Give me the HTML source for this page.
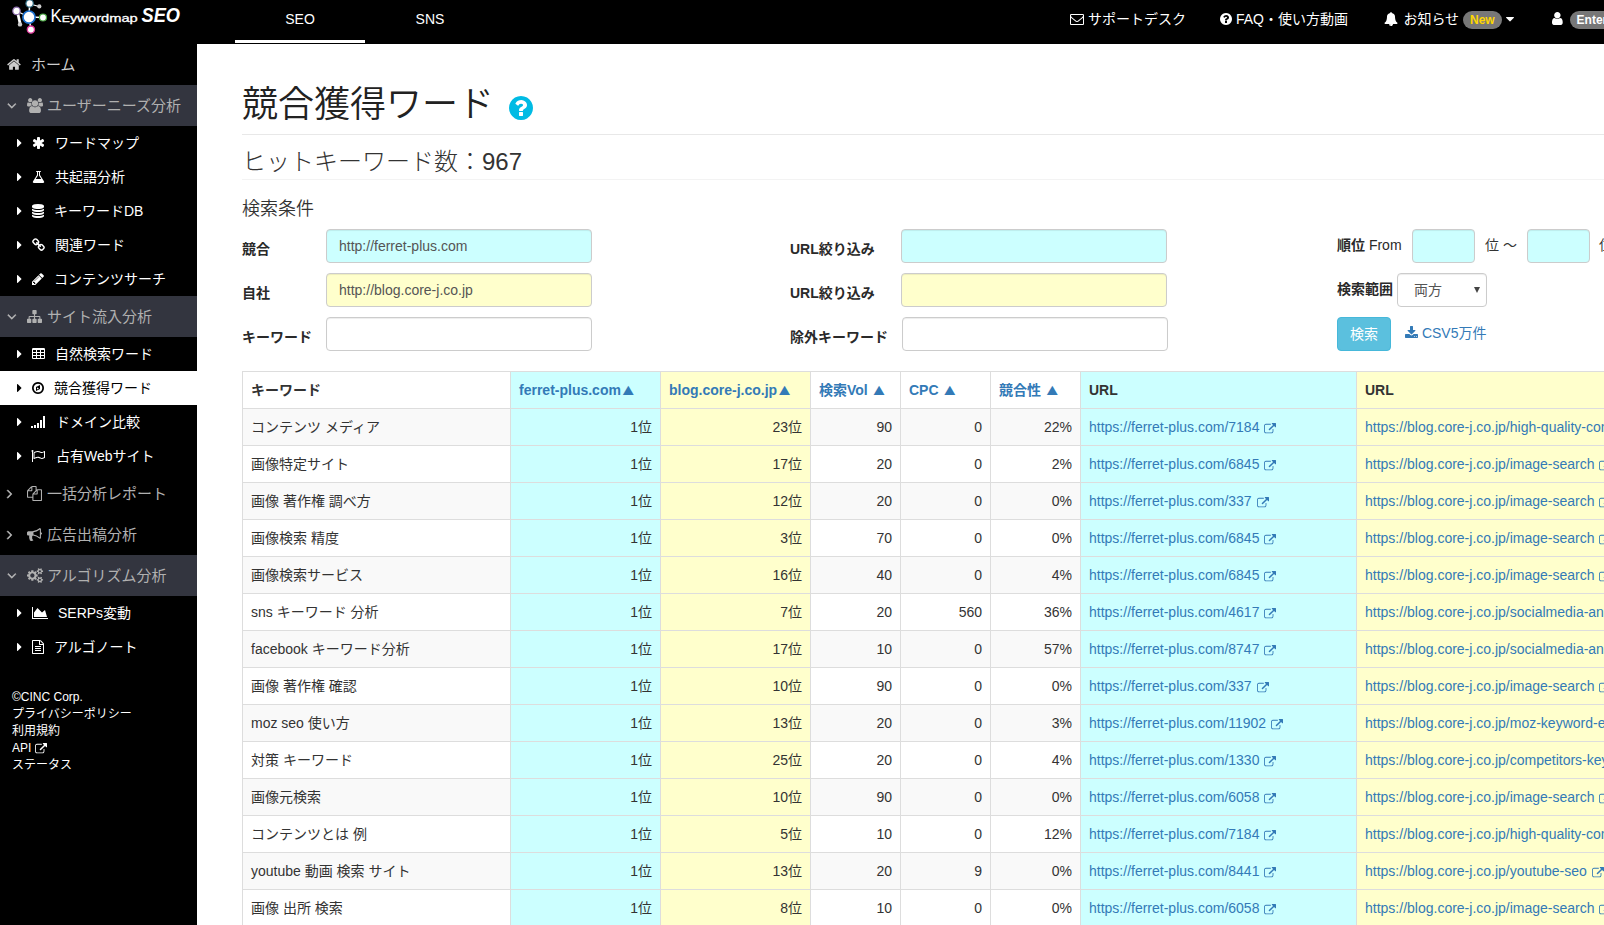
<!DOCTYPE html><html lang="ja"><head><meta charset="utf-8"><title>Keywordmap SEO</title><style>
*{box-sizing:border-box}
html,body{margin:0;padding:0}
body{width:1604px;height:925px;overflow:hidden;position:relative;background:#fff;color:#333;font-family:"Liberation Sans","Noto Sans CJK JP",sans-serif;font-size:14px;line-height:20px}
svg.i{display:inline-block;vertical-align:-2px;overflow:visible}
#nav{position:absolute;left:0;top:0;width:1604px;height:44px;background:#000;color:#fff;overflow:hidden}
#nav .tab{position:absolute;top:0;height:40px;line-height:38px;text-align:center;font-size:14px;color:#fff}
#nav .tabline{position:absolute;left:235px;top:40px;width:130px;height:3px;background:#fff}
#nav .ni{position:absolute;top:0;height:44px;line-height:39px;white-space:nowrap;font-size:14px}
.badge{display:inline-block;background:#777;color:#fff;font-weight:bold;font-size:12px;line-height:12px;padding:3px 7px;border-radius:10px;vertical-align:0px}
#side{position:absolute;left:0;top:44px;width:197px;height:881px;background:#000;color:#fff}
#side .st{position:absolute;left:0;width:197px;height:41px;line-height:42px;font-size:15px;color:#b0b0b0;margin-top:-44px}
#side .ss{position:absolute;left:0;width:197px;height:34px;line-height:34px;font-size:14px;color:#fff;margin-top:-44px}
#side .ss.act{background:#fff;color:#000}
#side svg.i{position:absolute}
#side span{position:absolute;top:0;white-space:nowrap}
#foot{position:absolute;left:12px;top:645px;font-size:12px;line-height:17px;color:#fff}
#foot svg.i{position:static}
#main{position:absolute;left:0;top:0;width:1604px;height:925px;pointer-events:none}
h1{position:absolute;left:242px;top:85px;margin:0;font-size:36px;line-height:40px;font-weight:350;color:#222;white-space:nowrap}
#help{position:absolute;left:509px;top:94px;height:28px;line-height:28px}
#help svg.i{vertical-align:top}
.hr{position:absolute;left:242px;width:1400px;height:1px;background:#e8e8e8}
h3{position:absolute;left:242px;top:147px;margin:0;font-size:24px;line-height:30px;font-weight:300;white-space:nowrap}
h4{position:absolute;left:242px;top:198px;margin:0;font-size:18px;line-height:22px;font-weight:350;white-space:nowrap}
label{position:absolute;font-weight:bold;white-space:nowrap;line-height:20px;color:#2a2a2a}
.t{position:absolute;white-space:nowrap;line-height:20px}
.inp{position:absolute;height:34px;border:1px solid #ccc;border-radius:4px;padding:6px 12px;line-height:20px;color:#555;box-shadow:inset 0 1px 1px rgba(0,0,0,.075);white-space:nowrap}
.sel{position:absolute;right:6px;top:13px;width:0;height:0;border-left:3.5px solid transparent;border-right:3.5px solid transparent;border-top:6px solid #444}
.btn{position:absolute;width:54px;height:34px;background:#5bc0de;border:1px solid #46b8da;border-radius:4px;color:#fff;text-align:center;line-height:32px}
.csv{position:absolute;color:#337ab7;white-space:nowrap}
table{position:absolute;left:242px;top:371px;border-collapse:collapse;table-layout:fixed;width:1514px}
th,td{border:1px solid #ddd;padding:8px;line-height:20px;text-align:left;white-space:nowrap;overflow:hidden;font-size:14px}
th{font-weight:bold;color:#333}
th.a{color:#337ab7}
td.r{text-align:right}
td.l{color:#337ab7}
tr.o td{background:#f9f9f9}
.b, tr.o td.b{background:#ccffff}
.y, tr.o td.y{background:#ffffcc}
.tri{font-family:"Noto Sans CJK JP",sans-serif;line-height:0;font-size:11.5px;font-weight:normal;margin:0 1.5px 0 1.5px;position:relative;top:-0.5px}

</style></head><body>
<div id="nav">
<svg id="logo" style="position:absolute;left:0;top:0" width="200" height="44" viewBox="0 0 200 44">
<g stroke="#fff" stroke-width="1.5"><line x1="29" y1="17" x2="29.6" y2="4"/><line x1="29" y1="17" x2="43" y2="17.5"/><line x1="29" y1="17" x2="31" y2="30"/><line x1="17.2" y1="11" x2="20" y2="23" stroke-width="2.8"/><line x1="16.5" y1="11" x2="29" y2="17" stroke-width="1.2"/><line x1="30" y1="4" x2="39" y2="6.5" stroke-width="1.2"/></g>
<circle cx="29" cy="17.1" r="6.1" fill="#fff" stroke="#1b70cf" stroke-width="1.7"/>
<circle cx="29.6" cy="3.4" r="3.7" fill="#fff" stroke="#2c6a80" stroke-width="1.2"/>
<circle cx="16.5" cy="10.9" r="3.7" fill="#fff" stroke="#8f6fae" stroke-width="1.2"/>
<circle cx="43" cy="17.5" r="3.5" fill="#fff" stroke="#4aa843" stroke-width="1.2"/>
<circle cx="30.9" cy="29.6" r="3.6" fill="#fff" stroke="#e0379a" stroke-width="1.3"/>
<circle cx="39.3" cy="6.4" r="2.1" fill="#ccc"/><circle cx="20" cy="24.4" r="2.2" fill="#ccc"/>
<text x="50.6" y="21.7" fill="#fff" font-family="Liberation Sans, sans-serif" font-size="18.8" textLength="11.2" lengthAdjust="spacingAndGlyphs">K</text>
<text x="61.8" y="21.7" fill="#fff" stroke="#fff" stroke-width="0.3" font-family="Liberation Sans, sans-serif" font-size="11" textLength="76" lengthAdjust="spacingAndGlyphs"><tspan font-size="9.2">E</tspan>ywordmap</text>
<text x="141.5" y="21.7" fill="#fff" font-family="Liberation Sans, sans-serif" font-size="20" font-weight="bold" font-style="italic" textLength="38.5" lengthAdjust="spacingAndGlyphs">SEO</text>
</svg>

<div class="tab" style="left:235px;width:130px">SEO</div><div class="tabline"></div>
<div class="tab" style="left:365px;width:130px">SNS</div>
<div class="ni" style="left:1070px"><svg class="i " style="width:14.00px;height:14px;" viewBox="0 -1536 1792 1792"><path fill="#fff" transform="scale(1,-1)" d="M1664 32v768q-32 -36 -69 -66q-268 -206 -426 -338q-51 -43 -83 -67t-86.5 -48.5t-102.5 -24.5h-1h-1q-48 0 -102.5 24.5t-86.5 48.5t-83 67q-158 132 -426 338q-37 30 -69 66v-768q0 -13 9.5 -22.5t22.5 -9.5h1472q13 0 22.5 9.5t9.5 22.5zM1664 1083v11v13.5t-0.5 13 t-3 12.5t-5.5 9t-9 7.5t-14 2.5h-1472q-13 0 -22.5 -9.5t-9.5 -22.5q0 -168 147 -284q193 -152 401 -317q6 -5 35 -29.5t46 -37.5t44.5 -31.5t50.5 -27.5t43 -9h1h1q20 0 43 9t50.5 27.5t44.5 31.5t46 37.5t35 29.5q208 165 401 317q54 43 100.5 115.5t46.5 131.5z M1792 1120v-1088q0 -66 -47 -113t-113 -47h-1472q-66 0 -113 47t-47 113v1088q0 66 47 113t113 47h1472q66 0 113 -47t47 -113z"/></svg> サポートデスク</div>
<div class="ni" style="left:1220px"><svg class="i " style="width:12.00px;height:14px;" viewBox="0 -1536 1536 1792"><path fill="#fff" transform="scale(1,-1)" d="M896 160v192q0 14 -9 23t-23 9h-192q-14 0 -23 -9t-9 -23v-192q0 -14 9 -23t23 -9h192q14 0 23 9t9 23zM1152 832q0 88 -55.5 163t-138.5 116t-170 41q-243 0 -371 -213q-15 -24 8 -42l132 -100q7 -6 19 -6q16 0 25 12q53 68 86 92q34 24 86 24q48 0 85.5 -26t37.5 -59 q0 -38 -20 -61t-68 -45q-63 -28 -115.5 -86.5t-52.5 -125.5v-36q0 -14 9 -23t23 -9h192q14 0 23 9t9 23q0 19 21.5 49.5t54.5 49.5q32 18 49 28.5t46 35t44.5 48t28 60.5t12.5 81zM1536 640q0 -209 -103 -385.5t-279.5 -279.5t-385.5 -103t-385.5 103t-279.5 279.5 t-103 385.5t103 385.5t279.5 279.5t385.5 103t385.5 -103t279.5 -279.5t103 -385.5z"/></svg> FAQ・使い方動画</div>
<div class="ni" style="left:1384px"><svg class="i " style="width:14.00px;height:14px;margin-right:1.5px" viewBox="0 -1536 1792 1792"><path fill="#fff" transform="scale(1,-1)" d="M912 -160q0 16 -16 16q-59 0 -101.5 42.5t-42.5 101.5q0 16 -16 16t-16 -16q0 -73 51.5 -124.5t124.5 -51.5q16 0 16 16zM1728 128q0 -52 -38 -90t-90 -38h-448q0 -106 -75 -181t-181 -75t-181 75t-75 181h-448q-52 0 -90 38t-38 90q50 42 91 88t85 119.5t74.5 158.5 t50 206t19.5 260q0 152 117 282.5t307 158.5q-8 19 -8 39q0 40 28 68t68 28t68 -28t28 -68q0 -20 -8 -39q190 -28 307 -158.5t117 -282.5q0 -139 19.5 -260t50 -206t74.5 -158.5t85 -119.5t91 -88z"/></svg> お知らせ <span class="badge" style="color:#ffd700">New</span> <svg class="i " style="width:8.00px;height:14px;" viewBox="0 -1536 1024 1792"><path fill="#fff" transform="scale(1,-1)" d="M1024 832q0 -26 -19 -45l-448 -448q-19 -19 -45 -19t-45 19l-448 448q-19 19 -19 45t19 45t45 19h896q26 0 45 -19t19 -45z"/></svg></div>
<div class="ni" style="left:1552px"><svg class="i " style="width:10.71px;height:15px;margin-right:3px" viewBox="0 -1536 1280 1792"><path fill="#fff" transform="scale(1,-1)" d="M1280 137q0 -109 -62.5 -187t-150.5 -78h-854q-88 0 -150.5 78t-62.5 187q0 85 8.5 160.5t31.5 152t58.5 131t94 89t134.5 34.5q131 -128 313 -128t313 128q76 0 134.5 -34.5t94 -89t58.5 -131t31.5 -152t8.5 -160.5zM1024 1024q0 -159 -112.5 -271.5t-271.5 -112.5 t-271.5 112.5t-112.5 271.5t112.5 271.5t271.5 112.5t271.5 -112.5t112.5 -271.5z"/></svg> <span class="badge">Enterprise</span></div>
</div>
<div id="side">
<div class="st" style="top:44px;"><svg class="i " style="width:13.93px;height:15px;left:7px;top:13px" viewBox="0 -1536 1664 1792"><path fill="#ccc" transform="scale(1,-1)" d="M1408 544v-480q0 -26 -19 -45t-45 -19h-384v384h-256v-384h-384q-26 0 -45 19t-19 45v480q0 1 0.5 3t0.5 3l575 474l575 -474q1 -2 1 -6zM1631 613l-62 -74q-8 -9 -21 -11h-3q-13 0 -21 7l-692 577l-692 -577q-12 -8 -24 -7q-13 2 -21 11l-62 74q-8 10 -7 23.5t11 21.5 l719 599q32 26 76 26t76 -26l244 -204v195q0 14 9 23t23 9h192q14 0 23 -9t9 -23v-408l219 -182q10 -8 11 -21.5t-7 -23.5z"/></svg><span style="left:31px;color:#ccc">ホーム</span></div>
<div class="st" style="top:85px;background:#33353f;"><svg class="i " style="width:9.64px;height:15px;left:7px;top:13px" viewBox="0 -1536 1152 1792"><path fill="#bbb" stroke="#bbb" stroke-width="50" transform="scale(1,-1)" d="M1075 800q0 -13 -10 -23l-466 -466q-10 -10 -23 -10t-23 10l-466 466q-10 10 -10 23t10 23l50 50q10 10 23 10t23 -10l393 -393l393 393q10 10 23 10t23 -10l50 -50q10 -10 10 -23z"/></svg><svg class="i " style="width:16.07px;height:15px;left:27px;top:13px" viewBox="0 -1536 1920 1792"><path fill="#b0b0b0" transform="scale(1,-1)" d="M593 640q-162 -5 -265 -128h-134q-82 0 -138 40.5t-56 118.5q0 353 124 353q6 0 43.5 -21t97.5 -42.5t119 -21.5q67 0 133 23q-5 -37 -5 -66q0 -139 81 -256zM1664 3q0 -120 -73 -189.5t-194 -69.5h-874q-121 0 -194 69.5t-73 189.5q0 53 3.5 103.5t14 109t26.5 108.5 t43 97.5t62 81t85.5 53.5t111.5 20q10 0 43 -21.5t73 -48t107 -48t135 -21.5t135 21.5t107 48t73 48t43 21.5q61 0 111.5 -20t85.5 -53.5t62 -81t43 -97.5t26.5 -108.5t14 -109t3.5 -103.5zM640 1280q0 -106 -75 -181t-181 -75t-181 75t-75 181t75 181t181 75t181 -75 t75 -181zM1344 896q0 -159 -112.5 -271.5t-271.5 -112.5t-271.5 112.5t-112.5 271.5t112.5 271.5t271.5 112.5t271.5 -112.5t112.5 -271.5zM1920 671q0 -78 -56 -118.5t-138 -40.5h-134q-103 123 -265 128q81 117 81 256q0 29 -5 66q66 -23 133 -23q59 0 119 21.5t97.5 42.5 t43.5 21q124 0 124 -353zM1792 1280q0 -106 -75 -181t-181 -75t-181 75t-75 181t75 181t181 75t181 -75t75 -181z"/></svg><span style="left:47px;">ユーザーニーズ分析</span></div>
<div class="ss" style="top:126px"><svg class="i " style="width:5.00px;height:14px;left:17px;top:10px" viewBox="0 -1536 640 1792"><path fill="#fff" transform="scale(1,-1)" d="M576 640q0 -26 -19 -45l-448 -448q-19 -19 -45 -19t-45 19t-19 45v896q0 26 19 45t45 19t45 -19l448 -448q19 -19 19 -45z"/></svg><svg class="i " style="width:13.00px;height:14px;left:31.6px;top:10px" viewBox="0 -1536 1664 1792"><path fill="#fff" transform="scale(1,-1)" d="M1482 486q46 -26 59.5 -77.5t-12.5 -97.5l-64 -110q-26 -46 -77.5 -59.5t-97.5 12.5l-266 153v-307q0 -52 -38 -90t-90 -38h-128q-52 0 -90 38t-38 90v307l-266 -153q-46 -26 -97.5 -12.5t-77.5 59.5l-64 110q-26 46 -12.5 97.5t59.5 77.5l266 154l-266 154 q-46 26 -59.5 77.5t12.5 97.5l64 110q26 46 77.5 59.5t97.5 -12.5l266 -153v307q0 52 38 90t90 38h128q52 0 90 -38t38 -90v-307l266 153q46 26 97.5 12.5t77.5 -59.5l64 -110q26 -46 12.5 -97.5t-59.5 -77.5l-266 -154z"/></svg><span style="left:55px">ワードマップ</span></div>
<div class="ss" style="top:160px"><svg class="i " style="width:5.00px;height:14px;left:17px;top:10px" viewBox="0 -1536 640 1792"><path fill="#fff" transform="scale(1,-1)" d="M576 640q0 -26 -19 -45l-448 -448q-19 -19 -45 -19t-45 19t-19 45v896q0 26 19 45t45 19t45 -19l448 -448q19 -19 19 -45z"/></svg><svg class="i " style="width:13.00px;height:14px;left:31.6px;top:10px" viewBox="0 -1536 1664 1792"><path fill="#fff" transform="scale(1,-1)" d="M1527 88q56 -89 21.5 -152.5t-140.5 -63.5h-1152q-106 0 -140.5 63.5t21.5 152.5l503 793v399h-64q-26 0 -45 19t-19 45t19 45t45 19h512q26 0 45 -19t19 -45t-19 -45t-45 -19h-64v-399zM748 813l-272 -429h712l-272 429l-20 31v37v399h-128v-399v-37z"/></svg><span style="left:55px">共起語分析</span></div>
<div class="ss" style="top:194px"><svg class="i " style="width:5.00px;height:14px;left:17px;top:10px" viewBox="0 -1536 640 1792"><path fill="#fff" transform="scale(1,-1)" d="M576 640q0 -26 -19 -45l-448 -448q-19 -19 -45 -19t-45 19t-19 45v896q0 26 19 45t45 19t45 -19l448 -448q19 -19 19 -45z"/></svg><svg class="i " style="width:12.00px;height:14px;left:32.1px;top:10px" viewBox="0 -1536 1536 1792"><path fill="#fff" transform="scale(1,-1)" d="M768 768q237 0 443 43t325 127v-170q0 -69 -103 -128t-280 -93.5t-385 -34.5t-385 34.5t-280 93.5t-103 128v170q119 -84 325 -127t443 -43zM768 0q237 0 443 43t325 127v-170q0 -69 -103 -128t-280 -93.5t-385 -34.5t-385 34.5t-280 93.5t-103 128v170q119 -84 325 -127 t443 -43zM768 384q237 0 443 43t325 127v-170q0 -69 -103 -128t-280 -93.5t-385 -34.5t-385 34.5t-280 93.5t-103 128v170q119 -84 325 -127t443 -43zM768 1536q208 0 385 -34.5t280 -93.5t103 -128v-128q0 -69 -103 -128t-280 -93.5t-385 -34.5t-385 34.5t-280 93.5 t-103 128v128q0 69 103 128t280 93.5t385 34.5z"/></svg><span style="left:54px">キーワードDB</span></div>
<div class="ss" style="top:228px"><svg class="i " style="width:5.00px;height:14px;left:17px;top:10px" viewBox="0 -1536 640 1792"><path fill="#fff" transform="scale(1,-1)" d="M576 640q0 -26 -19 -45l-448 -448q-19 -19 -45 -19t-45 19t-19 45v896q0 26 19 45t45 19t45 -19l448 -448q19 -19 19 -45z"/></svg><svg class="i " style="width:13.00px;height:14px;left:31.6px;top:10px" viewBox="0 -1536 1664 1792"><path fill="#fff" transform="scale(1,-1)" d="M1456 320q0 40 -28 68l-208 208q-28 28 -68 28q-42 0 -72 -32q3 -3 19 -18.5t21.5 -21.5t15 -19t13 -25.5t3.5 -27.5q0 -40 -28 -68t-68 -28q-15 0 -27.5 3.5t-25.5 13t-19 15t-21.5 21.5t-18.5 19q-33 -31 -33 -73q0 -40 28 -68l206 -207q27 -27 68 -27q40 0 68 26 l147 146q28 28 28 67zM753 1025q0 40 -28 68l-206 207q-28 28 -68 28q-39 0 -68 -27l-147 -146q-28 -28 -28 -67q0 -40 28 -68l208 -208q27 -27 68 -27q42 0 72 31q-3 3 -19 18.5t-21.5 21.5t-15 19t-13 25.5t-3.5 27.5q0 40 28 68t68 28q15 0 27.5 -3.5t25.5 -13t19 -15 t21.5 -21.5t18.5 -19q33 31 33 73zM1648 320q0 -120 -85 -203l-147 -146q-83 -83 -203 -83q-121 0 -204 85l-206 207q-83 83 -83 203q0 123 88 209l-88 88q-86 -88 -208 -88q-120 0 -204 84l-208 208q-84 84 -84 204t85 203l147 146q83 83 203 83q121 0 204 -85l206 -207 q83 -83 83 -203q0 -123 -88 -209l88 -88q86 88 208 88q120 0 204 -84l208 -208q84 -84 84 -204z"/></svg><span style="left:55px">関連ワード</span></div>
<div class="ss" style="top:262px"><svg class="i " style="width:5.00px;height:14px;left:17px;top:10px" viewBox="0 -1536 640 1792"><path fill="#fff" transform="scale(1,-1)" d="M576 640q0 -26 -19 -45l-448 -448q-19 -19 -45 -19t-45 19t-19 45v896q0 26 19 45t45 19t45 -19l448 -448q19 -19 19 -45z"/></svg><svg class="i " style="width:12.00px;height:14px;left:32.1px;top:10px" viewBox="0 -1536 1536 1792"><path fill="#fff" transform="scale(1,-1)" d="M363 0l91 91l-235 235l-91 -91v-107h128v-128h107zM886 928q0 22 -22 22q-10 0 -17 -7l-542 -542q-7 -7 -7 -17q0 -22 22 -22q10 0 17 7l542 542q7 7 7 17zM832 1120l416 -416l-832 -832h-416v416zM1515 1024q0 -53 -37 -90l-166 -166l-416 416l166 165q36 38 90 38 q53 0 91 -38l235 -234q37 -39 37 -91z"/></svg><span style="left:54px">コンテンツサーチ</span></div>
<div class="st" style="top:296px;background:#33353f;"><svg class="i " style="width:9.64px;height:15px;left:7px;top:13px" viewBox="0 -1536 1152 1792"><path fill="#bbb" stroke="#bbb" stroke-width="50" transform="scale(1,-1)" d="M1075 800q0 -13 -10 -23l-466 -466q-10 -10 -23 -10t-23 10l-466 466q-10 10 -10 23t10 23l50 50q10 10 23 10t23 -10l393 -393l393 393q10 10 23 10t23 -10l50 -50q10 -10 10 -23z"/></svg><svg class="i " style="width:15.00px;height:15px;left:27px;top:13px" viewBox="0 -1536 1792 1792"><path fill="#b0b0b0" transform="scale(1,-1)" d="M1792 288v-320q0 -40 -28 -68t-68 -28h-320q-40 0 -68 28t-28 68v320q0 40 28 68t68 28h96v192h-512v-192h96q40 0 68 -28t28 -68v-320q0 -40 -28 -68t-68 -28h-320q-40 0 -68 28t-28 68v320q0 40 28 68t68 28h96v192h-512v-192h96q40 0 68 -28t28 -68v-320 q0 -40 -28 -68t-68 -28h-320q-40 0 -68 28t-28 68v320q0 40 28 68t68 28h96v192q0 52 38 90t90 38h512v192h-96q-40 0 -68 28t-28 68v320q0 40 28 68t68 28h320q40 0 68 -28t28 -68v-320q0 -40 -28 -68t-68 -28h-96v-192h512q52 0 90 -38t38 -90v-192h96q40 0 68 -28t28 -68 z"/></svg><span style="left:47px;">サイト流入分析</span></div>
<div class="ss" style="top:337px"><svg class="i " style="width:5.00px;height:14px;left:17px;top:10px" viewBox="0 -1536 640 1792"><path fill="#fff" transform="scale(1,-1)" d="M576 640q0 -26 -19 -45l-448 -448q-19 -19 -45 -19t-45 19t-19 45v896q0 26 19 45t45 19t45 -19l448 -448q19 -19 19 -45z"/></svg><svg class="i " style="width:13.00px;height:14px;left:31.6px;top:10px" viewBox="0 -1536 1664 1792"><path fill="#fff" transform="scale(1,-1)" d="M512 160v192q0 14 -9 23t-23 9h-320q-14 0 -23 -9t-9 -23v-192q0 -14 9 -23t23 -9h320q14 0 23 9t9 23zM512 544v192q0 14 -9 23t-23 9h-320q-14 0 -23 -9t-9 -23v-192q0 -14 9 -23t23 -9h320q14 0 23 9t9 23zM1024 160v192q0 14 -9 23t-23 9h-320q-14 0 -23 -9t-9 -23 v-192q0 -14 9 -23t23 -9h320q14 0 23 9t9 23zM512 928v192q0 14 -9 23t-23 9h-320q-14 0 -23 -9t-9 -23v-192q0 -14 9 -23t23 -9h320q14 0 23 9t9 23zM1024 544v192q0 14 -9 23t-23 9h-320q-14 0 -23 -9t-9 -23v-192q0 -14 9 -23t23 -9h320q14 0 23 9t9 23zM1536 160v192 q0 14 -9 23t-23 9h-320q-14 0 -23 -9t-9 -23v-192q0 -14 9 -23t23 -9h320q14 0 23 9t9 23zM1024 928v192q0 14 -9 23t-23 9h-320q-14 0 -23 -9t-9 -23v-192q0 -14 9 -23t23 -9h320q14 0 23 9t9 23zM1536 544v192q0 14 -9 23t-23 9h-320q-14 0 -23 -9t-9 -23v-192 q0 -14 9 -23t23 -9h320q14 0 23 9t9 23zM1536 928v192q0 14 -9 23t-23 9h-320q-14 0 -23 -9t-9 -23v-192q0 -14 9 -23t23 -9h320q14 0 23 9t9 23zM1664 1248v-1088q0 -66 -47 -113t-113 -47h-1344q-66 0 -113 47t-47 113v1088q0 66 47 113t113 47h1344q66 0 113 -47t47 -113 z"/></svg><span style="left:55px">自然検索ワード</span></div>
<div class="ss act" style="top:371px"><svg class="i " style="width:5.00px;height:14px;left:17px;top:10px" viewBox="0 -1536 640 1792"><path fill="#000" transform="scale(1,-1)" d="M576 640q0 -26 -19 -45l-448 -448q-19 -19 -45 -19t-45 19t-19 45v896q0 26 19 45t45 19t45 -19l448 -448q19 -19 19 -45z"/></svg><svg class="i " style="width:12.00px;height:14px;left:32.1px;top:10px" viewBox="0 -1536 1536 1792"><path fill="#000" transform="scale(1,-1)" d="M640 448l256 128l-256 128v-256zM1024 1039v-542l-512 -256v542zM1312 640q0 148 -73 273t-198 198t-273 73t-273 -73t-198 -198t-73 -273t73 -273t198 -198t273 -73t273 73t198 198t73 273zM1536 640q0 -209 -103 -385.5t-279.5 -279.5t-385.5 -103t-385.5 103 t-279.5 279.5t-103 385.5t103 385.5t279.5 279.5t385.5 103t385.5 -103t279.5 -279.5t103 -385.5z"/></svg><span style="left:54px">競合獲得ワード</span></div>
<div class="ss" style="top:405px"><svg class="i " style="width:5.00px;height:14px;left:17px;top:10px" viewBox="0 -1536 640 1792"><path fill="#fff" transform="scale(1,-1)" d="M576 640q0 -26 -19 -45l-448 -448q-19 -19 -45 -19t-45 19t-19 45v896q0 26 19 45t45 19t45 -19l448 -448q19 -19 19 -45z"/></svg><svg class="i " style="width:14.00px;height:14px;left:31.1px;top:10px" viewBox="0 -1536 1792 1792"><path fill="#fff" transform="scale(1,-1)" d="M256 96v-192q0 -14 -9 -23t-23 -9h-192q-14 0 -23 9t-9 23v192q0 14 9 23t23 9h192q14 0 23 -9t9 -23zM640 224v-320q0 -14 -9 -23t-23 -9h-192q-14 0 -23 9t-9 23v320q0 14 9 23t23 9h192q14 0 23 -9t9 -23zM1024 480v-576q0 -14 -9 -23t-23 -9h-192q-14 0 -23 9t-9 23 v576q0 14 9 23t23 9h192q14 0 23 -9t9 -23zM1408 864v-960q0 -14 -9 -23t-23 -9h-192q-14 0 -23 9t-9 23v960q0 14 9 23t23 9h192q14 0 23 -9t9 -23zM1792 1376v-1472q0 -14 -9 -23t-23 -9h-192q-14 0 -23 9t-9 23v1472q0 14 9 23t23 9h192q14 0 23 -9t9 -23z"/></svg><span style="left:56px">ドメイン比較</span></div>
<div class="ss" style="top:439px"><svg class="i " style="width:5.00px;height:14px;left:17px;top:10px" viewBox="0 -1536 640 1792"><path fill="#fff" transform="scale(1,-1)" d="M576 640q0 -26 -19 -45l-448 -448q-19 -19 -45 -19t-45 19t-19 45v896q0 26 19 45t45 19t45 -19l448 -448q19 -19 19 -45z"/></svg><svg class="i " style="width:14.00px;height:14px;left:31.1px;top:10px" viewBox="0 -1536 1792 1792"><path fill="#fff" transform="scale(1,-1)" d="M1664 491v616q-169 -91 -306 -91q-82 0 -145 32q-100 49 -184 76.5t-178 27.5q-173 0 -403 -127v-599q245 113 433 113q55 0 103.5 -7.5t98 -26t77 -31t82.5 -39.5l28 -14q44 -22 101 -22q120 0 293 92zM320 1280q0 -35 -17.5 -64t-46.5 -46v-1266q0 -14 -9 -23t-23 -9 h-64q-14 0 -23 9t-9 23v1266q-29 17 -46.5 46t-17.5 64q0 53 37.5 90.5t90.5 37.5t90.5 -37.5t37.5 -90.5zM1792 1216v-763q0 -39 -35 -57q-10 -5 -17 -9q-218 -116 -369 -116q-88 0 -158 35l-28 14q-64 33 -99 48t-91 29t-114 14q-102 0 -235.5 -44t-228.5 -102 q-15 -9 -33 -9q-16 0 -32 8q-32 19 -32 56v742q0 35 31 55q35 21 78.5 42.5t114 52t152.5 49.5t155 19q112 0 209 -31t209 -86q38 -19 89 -19q122 0 310 112q22 12 31 17q31 16 62 -2q31 -20 31 -55z"/></svg><span style="left:56px">占有Webサイト</span></div>
<div class="st" style="top:473px;"><svg class="i " style="width:5.36px;height:15px;left:7px;top:13px" viewBox="0 -1536 640 1792"><path fill="#bbb" stroke="#bbb" stroke-width="50" transform="scale(1,-1)" d="M595 576q0 -13 -10 -23l-466 -466q-10 -10 -23 -10t-23 10l-50 50q-10 10 -10 23t10 23l393 393l-393 393q-10 10 -10 23t10 23l50 50q10 10 23 10t23 -10l466 -466q10 -10 10 -23z"/></svg><svg class="i " style="width:15.00px;height:15px;left:27px;top:13px" viewBox="0 -1536 1792 1792"><path fill="#b0b0b0" transform="scale(1,-1)" d="M1696 1152q40 0 68 -28t28 -68v-1216q0 -40 -28 -68t-68 -28h-960q-40 0 -68 28t-28 68v288h-544q-40 0 -68 28t-28 68v672q0 40 20 88t48 76l408 408q28 28 76 48t88 20h416q40 0 68 -28t28 -68v-328q68 40 128 40h416zM1152 939l-299 -299h299v299zM512 1323l-299 -299 h299v299zM708 676l316 316v416h-384v-416q0 -40 -28 -68t-68 -28h-416v-640h512v256q0 40 20 88t48 76zM1664 -128v1152h-384v-416q0 -40 -28 -68t-68 -28h-416v-640h896z"/></svg><span style="left:47px;">一括分析レポート</span></div>
<div class="st" style="top:514px;"><svg class="i " style="width:5.36px;height:15px;left:7px;top:13px" viewBox="0 -1536 640 1792"><path fill="#bbb" stroke="#bbb" stroke-width="50" transform="scale(1,-1)" d="M595 576q0 -13 -10 -23l-466 -466q-10 -10 -23 -10t-23 10l-50 50q-10 10 -10 23t10 23l393 393l-393 393q-10 10 -10 23t10 23l50 50q10 10 23 10t23 -10l466 -466q10 -10 10 -23z"/></svg><svg class="i " style="width:15.00px;height:15px;left:27px;top:13px" viewBox="0 -1536 1792 1792"><path fill="#b0b0b0" transform="scale(1,-1)" d="M1664 896q53 0 90.5 -37.5t37.5 -90.5t-37.5 -90.5t-90.5 -37.5v-384q0 -52 -38 -90t-90 -38q-417 347 -812 380q-58 -19 -91 -66t-31 -100.5t40 -92.5q-20 -33 -23 -65.5t6 -58t33.5 -55t48 -50t61.5 -50.5q-29 -58 -111.5 -83t-168.5 -11.5t-132 55.5q-7 23 -29.5 87.5 t-32 94.5t-23 89t-15 101t3.5 98.5t22 110.5h-122q-66 0 -113 47t-47 113v192q0 66 47 113t113 47h480q435 0 896 384q52 0 90 -38t38 -90v-384zM1536 292v954q-394 -302 -768 -343v-270q377 -42 768 -341z"/></svg><span style="left:47px;">広告出稿分析</span></div>
<div class="st" style="top:555px;background:#33353f;"><svg class="i " style="width:9.64px;height:15px;left:7px;top:13px" viewBox="0 -1536 1152 1792"><path fill="#bbb" stroke="#bbb" stroke-width="50" transform="scale(1,-1)" d="M1075 800q0 -13 -10 -23l-466 -466q-10 -10 -23 -10t-23 10l-466 466q-10 10 -10 23t10 23l50 50q10 10 23 10t23 -10l393 -393l393 393q10 10 23 10t23 -10l50 -50q10 -10 10 -23z"/></svg><svg class="i " style="width:16.07px;height:15px;left:27px;top:13px" viewBox="0 -1536 1920 1792"><path fill="#b0b0b0" transform="scale(1,-1)" d="M896 640q0 106 -75 181t-181 75t-181 -75t-75 -181t75 -181t181 -75t181 75t75 181zM1664 128q0 52 -38 90t-90 38t-90 -38t-38 -90q0 -53 37.5 -90.5t90.5 -37.5t90.5 37.5t37.5 90.5zM1664 1152q0 52 -38 90t-90 38t-90 -38t-38 -90q0 -53 37.5 -90.5t90.5 -37.5 t90.5 37.5t37.5 90.5zM1280 731v-185q0 -10 -7 -19.5t-16 -10.5l-155 -24q-11 -35 -32 -76q34 -48 90 -115q7 -11 7 -20q0 -12 -7 -19q-23 -30 -82.5 -89.5t-78.5 -59.5q-11 0 -21 7l-115 90q-37 -19 -77 -31q-11 -108 -23 -155q-7 -24 -30 -24h-186q-11 0 -20 7.5t-10 17.5 l-23 153q-34 10 -75 31l-118 -89q-7 -7 -20 -7q-11 0 -21 8q-144 133 -144 160q0 9 7 19q10 14 41 53t47 61q-23 44 -35 82l-152 24q-10 1 -17 9.5t-7 19.5v185q0 10 7 19.5t16 10.5l155 24q11 35 32 76q-34 48 -90 115q-7 11 -7 20q0 12 7 20q22 30 82 89t79 59q11 0 21 -7 l115 -90q34 18 77 32q11 108 23 154q7 24 30 24h186q11 0 20 -7.5t10 -17.5l23 -153q34 -10 75 -31l118 89q8 7 20 7q11 0 21 -8q144 -133 144 -160q0 -8 -7 -19q-12 -16 -42 -54t-45 -60q23 -48 34 -82l152 -23q10 -2 17 -10.5t7 -19.5zM1920 198v-140q0 -16 -149 -31 q-12 -27 -30 -52q51 -113 51 -138q0 -4 -4 -7q-122 -71 -124 -71q-8 0 -46 47t-52 68q-20 -2 -30 -2t-30 2q-14 -21 -52 -68t-46 -47q-2 0 -124 71q-4 3 -4 7q0 25 51 138q-18 25 -30 52q-149 15 -149 31v140q0 16 149 31q13 29 30 52q-51 113 -51 138q0 4 4 7q4 2 35 20 t59 34t30 16q8 0 46 -46.5t52 -67.5q20 2 30 2t30 -2q51 71 92 112l6 2q4 0 124 -70q4 -3 4 -7q0 -25 -51 -138q17 -23 30 -52q149 -15 149 -31zM1920 1222v-140q0 -16 -149 -31q-12 -27 -30 -52q51 -113 51 -138q0 -4 -4 -7q-122 -71 -124 -71q-8 0 -46 47t-52 68 q-20 -2 -30 -2t-30 2q-14 -21 -52 -68t-46 -47q-2 0 -124 71q-4 3 -4 7q0 25 51 138q-18 25 -30 52q-149 15 -149 31v140q0 16 149 31q13 29 30 52q-51 113 -51 138q0 4 4 7q4 2 35 20t59 34t30 16q8 0 46 -46.5t52 -67.5q20 2 30 2t30 -2q51 71 92 112l6 2q4 0 124 -70 q4 -3 4 -7q0 -25 -51 -138q17 -23 30 -52q149 -15 149 -31z"/></svg><span style="left:47px;">アルゴリズム分析</span></div>
<div class="ss" style="top:596px"><svg class="i " style="width:5.00px;height:14px;left:17px;top:10px" viewBox="0 -1536 640 1792"><path fill="#fff" transform="scale(1,-1)" d="M576 640q0 -26 -19 -45l-448 -448q-19 -19 -45 -19t-45 19t-19 45v896q0 26 19 45t45 19t45 -19l448 -448q19 -19 19 -45z"/></svg><svg class="i " style="width:16.00px;height:14px;left:32.0px;top:10px" viewBox="0 -1536 2048 1792"><path fill="#fff" transform="scale(1,-1)" d="M2048 0v-128h-2048v1536h128v-1408h1920zM1664 1024l256 -896h-1664v576l448 576l576 -576z"/></svg><span style="left:58px">SERPs変動</span></div>
<div class="ss" style="top:630px"><svg class="i " style="width:5.00px;height:14px;left:17px;top:10px" viewBox="0 -1536 640 1792"><path fill="#fff" transform="scale(1,-1)" d="M576 640q0 -26 -19 -45l-448 -448q-19 -19 -45 -19t-45 19t-19 45v896q0 26 19 45t45 19t45 -19l448 -448q19 -19 19 -45z"/></svg><svg class="i " style="width:12.00px;height:14px;left:32.1px;top:10px" viewBox="0 -1536 1536 1792"><path fill="#fff" transform="scale(1,-1)" d="M1468 1156q28 -28 48 -76t20 -88v-1152q0 -40 -28 -68t-68 -28h-1344q-40 0 -68 28t-28 68v1600q0 40 28 68t68 28h896q40 0 88 -20t76 -48zM1024 1400v-376h376q-10 29 -22 41l-313 313q-12 12 -41 22zM1408 -128v1024h-416q-40 0 -68 28t-28 68v416h-768v-1536h1280z M384 736q0 14 9 23t23 9h704q14 0 23 -9t9 -23v-64q0 -14 -9 -23t-23 -9h-704q-14 0 -23 9t-9 23v64zM1120 512q14 0 23 -9t9 -23v-64q0 -14 -9 -23t-23 -9h-704q-14 0 -23 9t-9 23v64q0 14 9 23t23 9h704zM1120 256q14 0 23 -9t9 -23v-64q0 -14 -9 -23t-23 -9h-704 q-14 0 -23 9t-9 23v64q0 14 9 23t23 9h704z"/></svg><span style="left:54px">アルゴノート</span></div>
<div id="foot">©CINC Corp.<br>プライバシーポリシー<br>利用規約<br>API <svg class="i " style="width:12.00px;height:12px;position:relative;top:1px" viewBox="0 -1536 1792 1792"><path fill="#fff" transform="scale(1,-1)" d="M1408 608v-320q0 -119 -84.5 -203.5t-203.5 -84.5h-832q-119 0 -203.5 84.5t-84.5 203.5v832q0 119 84.5 203.5t203.5 84.5h704q14 0 23 -9t9 -23v-64q0 -14 -9 -23t-23 -9h-704q-66 0 -113 -47t-47 -113v-832q0 -66 47 -113t113 -47h832q66 0 113 47t47 113v320 q0 14 9 23t23 9h64q14 0 23 -9t9 -23zM1792 1472v-512q0 -26 -19 -45t-45 -19t-45 19l-176 176l-652 -652q-10 -10 -23 -10t-23 10l-114 114q-10 10 -10 23t10 23l652 652l-176 176q-19 19 -19 45t19 45t45 19h512q26 0 45 -19t19 -45z"/></svg><br>ステータス</div>
</div>
<div id="main">
<h1>競合獲得ワード</h1><div id="help"><svg class="i " style="width:24.00px;height:28px;" viewBox="0 -1536 1536 1792"><path fill="#00bbe4" transform="scale(1,-1)" d="M896 160v192q0 14 -9 23t-23 9h-192q-14 0 -23 -9t-9 -23v-192q0 -14 9 -23t23 -9h192q14 0 23 9t9 23zM1152 832q0 88 -55.5 163t-138.5 116t-170 41q-243 0 -371 -213q-15 -24 8 -42l132 -100q7 -6 19 -6q16 0 25 12q53 68 86 92q34 24 86 24q48 0 85.5 -26t37.5 -59 q0 -38 -20 -61t-68 -45q-63 -28 -115.5 -86.5t-52.5 -125.5v-36q0 -14 9 -23t23 -9h192q14 0 23 9t9 23q0 19 21.5 49.5t54.5 49.5q32 18 49 28.5t46 35t44.5 48t28 60.5t12.5 81zM1536 640q0 -209 -103 -385.5t-279.5 -279.5t-385.5 -103t-385.5 103t-279.5 279.5 t-103 385.5t103 385.5t279.5 279.5t385.5 103t385.5 -103t279.5 -279.5t103 -385.5z"/></svg></div><div class="hr" style="top:134px"></div>
<h3>ヒットキーワード数：967</h3><div class="hr" style="top:179px;background:#f3f3f3"></div>
<h4>検索条件</h4>
<label style="left:242px;top:239px">競合</label><div class="inp" style="left:326px;top:229px;width:266px;background:#ccffff">http://ferret-plus.com</div>
<label style="left:242px;top:283px">自社</label><div class="inp" style="left:326px;top:273px;width:266px;background:#ffffcc">http://blog.core-j.co.jp</div>
<label style="left:242px;top:327px">キーワード</label><div class="inp" style="left:326px;top:317px;width:266px;background:#fff"></div>
<label style="left:790px;top:239px">URL絞り込み</label><div class="inp" style="left:901px;top:229px;width:266px;background:#ccffff"></div>
<label style="left:790px;top:283px">URL絞り込み</label><div class="inp" style="left:901px;top:273px;width:266px;background:#ffffcc"></div>
<label style="left:790px;top:327px">除外キーワード</label><div class="inp" style="left:902px;top:317px;width:266px;background:#fff"></div>
<label style="left:1337px;top:235px">順位 <span style="font-weight:normal">From</span></label><div class="inp" style="left:1412px;top:229px;width:63px;background:#ccffff"></div>
<span class="t" style="left:1485px;top:235px">位 ～</span><div class="inp" style="left:1527px;top:229px;width:63px;background:#ccffff"></div><span class="t" style="left:1599px;top:235px">位</span>
<label style="left:1337px;top:279px">検索範囲</label><div class="inp" style="left:1397px;top:273px;width:90px;background:#fff;padding-left:16px">両方<i class="sel"></i></div>
<div class="btn" style="left:1337px;top:317px">検索</div>
<div class="csv" style="left:1405px;top:323px"><svg class="i " style="width:13.00px;height:14px;" viewBox="0 -1536 1664 1792"><path fill="#337ab7" transform="scale(1,-1)" d="M1280 192q0 26 -19 45t-45 19t-45 -19t-19 -45t19 -45t45 -19t45 19t19 45zM1536 192q0 26 -19 45t-45 19t-45 -19t-19 -45t19 -45t45 -19t45 19t19 45zM1664 416v-320q0 -40 -28 -68t-68 -28h-1472q-40 0 -68 28t-28 68v320q0 40 28 68t68 28h465l135 -136 q58 -56 136 -56t136 56l136 136h464q40 0 68 -28t28 -68zM1339 985q17 -41 -14 -70l-448 -448q-18 -19 -45 -19t-45 19l-448 448q-31 29 -14 70q17 39 59 39h256v448q0 26 19 45t45 19h256q26 0 45 -19t19 -45v-448h256q42 0 59 -39z"/></svg> CSV5万件</div>
<table><colgroup><col style="width:268px"><col style="width:150px"><col style="width:150px"><col style="width:90px"><col style="width:90px"><col style="width:90px"><col style="width:276px"><col style="width:400px"></colgroup>
<tr class="h"><th>キーワード</th><th class="b a">ferret-plus.com<span class="tri">▲</span></th><th class="y a">blog.core-j.co.jp<span class="tri">▲</span></th><th class="a">検索Vol <span class="tri">▲</span></th><th class="a">CPC <span class="tri">▲</span></th><th class="a">競合性 <span class="tri">▲</span></th><th class="b">URL</th><th class="y">URL</th></tr>
<tr class="o"><td>コンテンツ メディア</td><td class="b r">1位</td><td class="y r">23位</td><td class="r">90</td><td class="r">0</td><td class="r">22%</td><td class="b l">https://ferret-plus.com/7184 <svg class="i " style="width:12.00px;height:12px;position:relative;top:0.5px;margin-left:1px" viewBox="0 -1536 1792 1792"><path fill="#337ab7" transform="scale(1,-1)" d="M1408 608v-320q0 -119 -84.5 -203.5t-203.5 -84.5h-832q-119 0 -203.5 84.5t-84.5 203.5v832q0 119 84.5 203.5t203.5 84.5h704q14 0 23 -9t9 -23v-64q0 -14 -9 -23t-23 -9h-704q-66 0 -113 -47t-47 -113v-832q0 -66 47 -113t113 -47h832q66 0 113 47t47 113v320 q0 14 9 23t23 9h64q14 0 23 -9t9 -23zM1792 1472v-512q0 -26 -19 -45t-45 -19t-45 19l-176 176l-652 -652q-10 -10 -23 -10t-23 10l-114 114q-10 10 -10 23t10 23l652 652l-176 176q-19 19 -19 45t19 45t45 19h512q26 0 45 -19t19 -45z"/></svg></td><td class="y l">https://blog.core-j.co.jp/high-quality-content-media <svg class="i " style="width:12.00px;height:12px;position:relative;top:0.5px;margin-left:1px" viewBox="0 -1536 1792 1792"><path fill="#337ab7" transform="scale(1,-1)" d="M1408 608v-320q0 -119 -84.5 -203.5t-203.5 -84.5h-832q-119 0 -203.5 84.5t-84.5 203.5v832q0 119 84.5 203.5t203.5 84.5h704q14 0 23 -9t9 -23v-64q0 -14 -9 -23t-23 -9h-704q-66 0 -113 -47t-47 -113v-832q0 -66 47 -113t113 -47h832q66 0 113 47t47 113v320 q0 14 9 23t23 9h64q14 0 23 -9t9 -23zM1792 1472v-512q0 -26 -19 -45t-45 -19t-45 19l-176 176l-652 -652q-10 -10 -23 -10t-23 10l-114 114q-10 10 -10 23t10 23l652 652l-176 176q-19 19 -19 45t19 45t45 19h512q26 0 45 -19t19 -45z"/></svg></td></tr>
<tr class="e"><td>画像特定サイト</td><td class="b r">1位</td><td class="y r">17位</td><td class="r">20</td><td class="r">0</td><td class="r">2%</td><td class="b l">https://ferret-plus.com/6845 <svg class="i " style="width:12.00px;height:12px;position:relative;top:0.5px;margin-left:1px" viewBox="0 -1536 1792 1792"><path fill="#337ab7" transform="scale(1,-1)" d="M1408 608v-320q0 -119 -84.5 -203.5t-203.5 -84.5h-832q-119 0 -203.5 84.5t-84.5 203.5v832q0 119 84.5 203.5t203.5 84.5h704q14 0 23 -9t9 -23v-64q0 -14 -9 -23t-23 -9h-704q-66 0 -113 -47t-47 -113v-832q0 -66 47 -113t113 -47h832q66 0 113 47t47 113v320 q0 14 9 23t23 9h64q14 0 23 -9t9 -23zM1792 1472v-512q0 -26 -19 -45t-45 -19t-45 19l-176 176l-652 -652q-10 -10 -23 -10t-23 10l-114 114q-10 10 -10 23t10 23l652 652l-176 176q-19 19 -19 45t19 45t45 19h512q26 0 45 -19t19 -45z"/></svg></td><td class="y l">https://blog.core-j.co.jp/image-search <svg class="i " style="width:12.00px;height:12px;position:relative;top:0.5px;margin-left:1px" viewBox="0 -1536 1792 1792"><path fill="#337ab7" transform="scale(1,-1)" d="M1408 608v-320q0 -119 -84.5 -203.5t-203.5 -84.5h-832q-119 0 -203.5 84.5t-84.5 203.5v832q0 119 84.5 203.5t203.5 84.5h704q14 0 23 -9t9 -23v-64q0 -14 -9 -23t-23 -9h-704q-66 0 -113 -47t-47 -113v-832q0 -66 47 -113t113 -47h832q66 0 113 47t47 113v320 q0 14 9 23t23 9h64q14 0 23 -9t9 -23zM1792 1472v-512q0 -26 -19 -45t-45 -19t-45 19l-176 176l-652 -652q-10 -10 -23 -10t-23 10l-114 114q-10 10 -10 23t10 23l652 652l-176 176q-19 19 -19 45t19 45t45 19h512q26 0 45 -19t19 -45z"/></svg></td></tr>
<tr class="o"><td>画像 著作権 調べ方</td><td class="b r">1位</td><td class="y r">12位</td><td class="r">20</td><td class="r">0</td><td class="r">0%</td><td class="b l">https://ferret-plus.com/337 <svg class="i " style="width:12.00px;height:12px;position:relative;top:0.5px;margin-left:1px" viewBox="0 -1536 1792 1792"><path fill="#337ab7" transform="scale(1,-1)" d="M1408 608v-320q0 -119 -84.5 -203.5t-203.5 -84.5h-832q-119 0 -203.5 84.5t-84.5 203.5v832q0 119 84.5 203.5t203.5 84.5h704q14 0 23 -9t9 -23v-64q0 -14 -9 -23t-23 -9h-704q-66 0 -113 -47t-47 -113v-832q0 -66 47 -113t113 -47h832q66 0 113 47t47 113v320 q0 14 9 23t23 9h64q14 0 23 -9t9 -23zM1792 1472v-512q0 -26 -19 -45t-45 -19t-45 19l-176 176l-652 -652q-10 -10 -23 -10t-23 10l-114 114q-10 10 -10 23t10 23l652 652l-176 176q-19 19 -19 45t19 45t45 19h512q26 0 45 -19t19 -45z"/></svg></td><td class="y l">https://blog.core-j.co.jp/image-search <svg class="i " style="width:12.00px;height:12px;position:relative;top:0.5px;margin-left:1px" viewBox="0 -1536 1792 1792"><path fill="#337ab7" transform="scale(1,-1)" d="M1408 608v-320q0 -119 -84.5 -203.5t-203.5 -84.5h-832q-119 0 -203.5 84.5t-84.5 203.5v832q0 119 84.5 203.5t203.5 84.5h704q14 0 23 -9t9 -23v-64q0 -14 -9 -23t-23 -9h-704q-66 0 -113 -47t-47 -113v-832q0 -66 47 -113t113 -47h832q66 0 113 47t47 113v320 q0 14 9 23t23 9h64q14 0 23 -9t9 -23zM1792 1472v-512q0 -26 -19 -45t-45 -19t-45 19l-176 176l-652 -652q-10 -10 -23 -10t-23 10l-114 114q-10 10 -10 23t10 23l652 652l-176 176q-19 19 -19 45t19 45t45 19h512q26 0 45 -19t19 -45z"/></svg></td></tr>
<tr class="e"><td>画像検索 精度</td><td class="b r">1位</td><td class="y r">3位</td><td class="r">70</td><td class="r">0</td><td class="r">0%</td><td class="b l">https://ferret-plus.com/6845 <svg class="i " style="width:12.00px;height:12px;position:relative;top:0.5px;margin-left:1px" viewBox="0 -1536 1792 1792"><path fill="#337ab7" transform="scale(1,-1)" d="M1408 608v-320q0 -119 -84.5 -203.5t-203.5 -84.5h-832q-119 0 -203.5 84.5t-84.5 203.5v832q0 119 84.5 203.5t203.5 84.5h704q14 0 23 -9t9 -23v-64q0 -14 -9 -23t-23 -9h-704q-66 0 -113 -47t-47 -113v-832q0 -66 47 -113t113 -47h832q66 0 113 47t47 113v320 q0 14 9 23t23 9h64q14 0 23 -9t9 -23zM1792 1472v-512q0 -26 -19 -45t-45 -19t-45 19l-176 176l-652 -652q-10 -10 -23 -10t-23 10l-114 114q-10 10 -10 23t10 23l652 652l-176 176q-19 19 -19 45t19 45t45 19h512q26 0 45 -19t19 -45z"/></svg></td><td class="y l">https://blog.core-j.co.jp/image-search <svg class="i " style="width:12.00px;height:12px;position:relative;top:0.5px;margin-left:1px" viewBox="0 -1536 1792 1792"><path fill="#337ab7" transform="scale(1,-1)" d="M1408 608v-320q0 -119 -84.5 -203.5t-203.5 -84.5h-832q-119 0 -203.5 84.5t-84.5 203.5v832q0 119 84.5 203.5t203.5 84.5h704q14 0 23 -9t9 -23v-64q0 -14 -9 -23t-23 -9h-704q-66 0 -113 -47t-47 -113v-832q0 -66 47 -113t113 -47h832q66 0 113 47t47 113v320 q0 14 9 23t23 9h64q14 0 23 -9t9 -23zM1792 1472v-512q0 -26 -19 -45t-45 -19t-45 19l-176 176l-652 -652q-10 -10 -23 -10t-23 10l-114 114q-10 10 -10 23t10 23l652 652l-176 176q-19 19 -19 45t19 45t45 19h512q26 0 45 -19t19 -45z"/></svg></td></tr>
<tr class="o"><td>画像検索サービス</td><td class="b r">1位</td><td class="y r">16位</td><td class="r">40</td><td class="r">0</td><td class="r">4%</td><td class="b l">https://ferret-plus.com/6845 <svg class="i " style="width:12.00px;height:12px;position:relative;top:0.5px;margin-left:1px" viewBox="0 -1536 1792 1792"><path fill="#337ab7" transform="scale(1,-1)" d="M1408 608v-320q0 -119 -84.5 -203.5t-203.5 -84.5h-832q-119 0 -203.5 84.5t-84.5 203.5v832q0 119 84.5 203.5t203.5 84.5h704q14 0 23 -9t9 -23v-64q0 -14 -9 -23t-23 -9h-704q-66 0 -113 -47t-47 -113v-832q0 -66 47 -113t113 -47h832q66 0 113 47t47 113v320 q0 14 9 23t23 9h64q14 0 23 -9t9 -23zM1792 1472v-512q0 -26 -19 -45t-45 -19t-45 19l-176 176l-652 -652q-10 -10 -23 -10t-23 10l-114 114q-10 10 -10 23t10 23l652 652l-176 176q-19 19 -19 45t19 45t45 19h512q26 0 45 -19t19 -45z"/></svg></td><td class="y l">https://blog.core-j.co.jp/image-search <svg class="i " style="width:12.00px;height:12px;position:relative;top:0.5px;margin-left:1px" viewBox="0 -1536 1792 1792"><path fill="#337ab7" transform="scale(1,-1)" d="M1408 608v-320q0 -119 -84.5 -203.5t-203.5 -84.5h-832q-119 0 -203.5 84.5t-84.5 203.5v832q0 119 84.5 203.5t203.5 84.5h704q14 0 23 -9t9 -23v-64q0 -14 -9 -23t-23 -9h-704q-66 0 -113 -47t-47 -113v-832q0 -66 47 -113t113 -47h832q66 0 113 47t47 113v320 q0 14 9 23t23 9h64q14 0 23 -9t9 -23zM1792 1472v-512q0 -26 -19 -45t-45 -19t-45 19l-176 176l-652 -652q-10 -10 -23 -10t-23 10l-114 114q-10 10 -10 23t10 23l652 652l-176 176q-19 19 -19 45t19 45t45 19h512q26 0 45 -19t19 -45z"/></svg></td></tr>
<tr class="e"><td>sns キーワード 分析</td><td class="b r">1位</td><td class="y r">7位</td><td class="r">20</td><td class="r">560</td><td class="r">36%</td><td class="b l">https://ferret-plus.com/4617 <svg class="i " style="width:12.00px;height:12px;position:relative;top:0.5px;margin-left:1px" viewBox="0 -1536 1792 1792"><path fill="#337ab7" transform="scale(1,-1)" d="M1408 608v-320q0 -119 -84.5 -203.5t-203.5 -84.5h-832q-119 0 -203.5 84.5t-84.5 203.5v832q0 119 84.5 203.5t203.5 84.5h704q14 0 23 -9t9 -23v-64q0 -14 -9 -23t-23 -9h-704q-66 0 -113 -47t-47 -113v-832q0 -66 47 -113t113 -47h832q66 0 113 47t47 113v320 q0 14 9 23t23 9h64q14 0 23 -9t9 -23zM1792 1472v-512q0 -26 -19 -45t-45 -19t-45 19l-176 176l-652 -652q-10 -10 -23 -10t-23 10l-114 114q-10 10 -10 23t10 23l652 652l-176 176q-19 19 -19 45t19 45t45 19h512q26 0 45 -19t19 -45z"/></svg></td><td class="y l">https://blog.core-j.co.jp/socialmedia-analytics-tools <svg class="i " style="width:12.00px;height:12px;position:relative;top:0.5px;margin-left:1px" viewBox="0 -1536 1792 1792"><path fill="#337ab7" transform="scale(1,-1)" d="M1408 608v-320q0 -119 -84.5 -203.5t-203.5 -84.5h-832q-119 0 -203.5 84.5t-84.5 203.5v832q0 119 84.5 203.5t203.5 84.5h704q14 0 23 -9t9 -23v-64q0 -14 -9 -23t-23 -9h-704q-66 0 -113 -47t-47 -113v-832q0 -66 47 -113t113 -47h832q66 0 113 47t47 113v320 q0 14 9 23t23 9h64q14 0 23 -9t9 -23zM1792 1472v-512q0 -26 -19 -45t-45 -19t-45 19l-176 176l-652 -652q-10 -10 -23 -10t-23 10l-114 114q-10 10 -10 23t10 23l652 652l-176 176q-19 19 -19 45t19 45t45 19h512q26 0 45 -19t19 -45z"/></svg></td></tr>
<tr class="o"><td>facebook キーワード分析</td><td class="b r">1位</td><td class="y r">17位</td><td class="r">10</td><td class="r">0</td><td class="r">57%</td><td class="b l">https://ferret-plus.com/8747 <svg class="i " style="width:12.00px;height:12px;position:relative;top:0.5px;margin-left:1px" viewBox="0 -1536 1792 1792"><path fill="#337ab7" transform="scale(1,-1)" d="M1408 608v-320q0 -119 -84.5 -203.5t-203.5 -84.5h-832q-119 0 -203.5 84.5t-84.5 203.5v832q0 119 84.5 203.5t203.5 84.5h704q14 0 23 -9t9 -23v-64q0 -14 -9 -23t-23 -9h-704q-66 0 -113 -47t-47 -113v-832q0 -66 47 -113t113 -47h832q66 0 113 47t47 113v320 q0 14 9 23t23 9h64q14 0 23 -9t9 -23zM1792 1472v-512q0 -26 -19 -45t-45 -19t-45 19l-176 176l-652 -652q-10 -10 -23 -10t-23 10l-114 114q-10 10 -10 23t10 23l652 652l-176 176q-19 19 -19 45t19 45t45 19h512q26 0 45 -19t19 -45z"/></svg></td><td class="y l">https://blog.core-j.co.jp/socialmedia-analytics-tools <svg class="i " style="width:12.00px;height:12px;position:relative;top:0.5px;margin-left:1px" viewBox="0 -1536 1792 1792"><path fill="#337ab7" transform="scale(1,-1)" d="M1408 608v-320q0 -119 -84.5 -203.5t-203.5 -84.5h-832q-119 0 -203.5 84.5t-84.5 203.5v832q0 119 84.5 203.5t203.5 84.5h704q14 0 23 -9t9 -23v-64q0 -14 -9 -23t-23 -9h-704q-66 0 -113 -47t-47 -113v-832q0 -66 47 -113t113 -47h832q66 0 113 47t47 113v320 q0 14 9 23t23 9h64q14 0 23 -9t9 -23zM1792 1472v-512q0 -26 -19 -45t-45 -19t-45 19l-176 176l-652 -652q-10 -10 -23 -10t-23 10l-114 114q-10 10 -10 23t10 23l652 652l-176 176q-19 19 -19 45t19 45t45 19h512q26 0 45 -19t19 -45z"/></svg></td></tr>
<tr class="e"><td>画像 著作権 確認</td><td class="b r">1位</td><td class="y r">10位</td><td class="r">90</td><td class="r">0</td><td class="r">0%</td><td class="b l">https://ferret-plus.com/337 <svg class="i " style="width:12.00px;height:12px;position:relative;top:0.5px;margin-left:1px" viewBox="0 -1536 1792 1792"><path fill="#337ab7" transform="scale(1,-1)" d="M1408 608v-320q0 -119 -84.5 -203.5t-203.5 -84.5h-832q-119 0 -203.5 84.5t-84.5 203.5v832q0 119 84.5 203.5t203.5 84.5h704q14 0 23 -9t9 -23v-64q0 -14 -9 -23t-23 -9h-704q-66 0 -113 -47t-47 -113v-832q0 -66 47 -113t113 -47h832q66 0 113 47t47 113v320 q0 14 9 23t23 9h64q14 0 23 -9t9 -23zM1792 1472v-512q0 -26 -19 -45t-45 -19t-45 19l-176 176l-652 -652q-10 -10 -23 -10t-23 10l-114 114q-10 10 -10 23t10 23l652 652l-176 176q-19 19 -19 45t19 45t45 19h512q26 0 45 -19t19 -45z"/></svg></td><td class="y l">https://blog.core-j.co.jp/image-search <svg class="i " style="width:12.00px;height:12px;position:relative;top:0.5px;margin-left:1px" viewBox="0 -1536 1792 1792"><path fill="#337ab7" transform="scale(1,-1)" d="M1408 608v-320q0 -119 -84.5 -203.5t-203.5 -84.5h-832q-119 0 -203.5 84.5t-84.5 203.5v832q0 119 84.5 203.5t203.5 84.5h704q14 0 23 -9t9 -23v-64q0 -14 -9 -23t-23 -9h-704q-66 0 -113 -47t-47 -113v-832q0 -66 47 -113t113 -47h832q66 0 113 47t47 113v320 q0 14 9 23t23 9h64q14 0 23 -9t9 -23zM1792 1472v-512q0 -26 -19 -45t-45 -19t-45 19l-176 176l-652 -652q-10 -10 -23 -10t-23 10l-114 114q-10 10 -10 23t10 23l652 652l-176 176q-19 19 -19 45t19 45t45 19h512q26 0 45 -19t19 -45z"/></svg></td></tr>
<tr class="o"><td>moz seo 使い方</td><td class="b r">1位</td><td class="y r">13位</td><td class="r">20</td><td class="r">0</td><td class="r">3%</td><td class="b l">https://ferret-plus.com/11902 <svg class="i " style="width:12.00px;height:12px;position:relative;top:0.5px;margin-left:1px" viewBox="0 -1536 1792 1792"><path fill="#337ab7" transform="scale(1,-1)" d="M1408 608v-320q0 -119 -84.5 -203.5t-203.5 -84.5h-832q-119 0 -203.5 84.5t-84.5 203.5v832q0 119 84.5 203.5t203.5 84.5h704q14 0 23 -9t9 -23v-64q0 -14 -9 -23t-23 -9h-704q-66 0 -113 -47t-47 -113v-832q0 -66 47 -113t113 -47h832q66 0 113 47t47 113v320 q0 14 9 23t23 9h64q14 0 23 -9t9 -23zM1792 1472v-512q0 -26 -19 -45t-45 -19t-45 19l-176 176l-652 -652q-10 -10 -23 -10t-23 10l-114 114q-10 10 -10 23t10 23l652 652l-176 176q-19 19 -19 45t19 45t45 19h512q26 0 45 -19t19 -45z"/></svg></td><td class="y l">https://blog.core-j.co.jp/moz-keyword-explorer <svg class="i " style="width:12.00px;height:12px;position:relative;top:0.5px;margin-left:1px" viewBox="0 -1536 1792 1792"><path fill="#337ab7" transform="scale(1,-1)" d="M1408 608v-320q0 -119 -84.5 -203.5t-203.5 -84.5h-832q-119 0 -203.5 84.5t-84.5 203.5v832q0 119 84.5 203.5t203.5 84.5h704q14 0 23 -9t9 -23v-64q0 -14 -9 -23t-23 -9h-704q-66 0 -113 -47t-47 -113v-832q0 -66 47 -113t113 -47h832q66 0 113 47t47 113v320 q0 14 9 23t23 9h64q14 0 23 -9t9 -23zM1792 1472v-512q0 -26 -19 -45t-45 -19t-45 19l-176 176l-652 -652q-10 -10 -23 -10t-23 10l-114 114q-10 10 -10 23t10 23l652 652l-176 176q-19 19 -19 45t19 45t45 19h512q26 0 45 -19t19 -45z"/></svg></td></tr>
<tr class="e"><td>対策 キーワード</td><td class="b r">1位</td><td class="y r">25位</td><td class="r">20</td><td class="r">0</td><td class="r">4%</td><td class="b l">https://ferret-plus.com/1330 <svg class="i " style="width:12.00px;height:12px;position:relative;top:0.5px;margin-left:1px" viewBox="0 -1536 1792 1792"><path fill="#337ab7" transform="scale(1,-1)" d="M1408 608v-320q0 -119 -84.5 -203.5t-203.5 -84.5h-832q-119 0 -203.5 84.5t-84.5 203.5v832q0 119 84.5 203.5t203.5 84.5h704q14 0 23 -9t9 -23v-64q0 -14 -9 -23t-23 -9h-704q-66 0 -113 -47t-47 -113v-832q0 -66 47 -113t113 -47h832q66 0 113 47t47 113v320 q0 14 9 23t23 9h64q14 0 23 -9t9 -23zM1792 1472v-512q0 -26 -19 -45t-45 -19t-45 19l-176 176l-652 -652q-10 -10 -23 -10t-23 10l-114 114q-10 10 -10 23t10 23l652 652l-176 176q-19 19 -19 45t19 45t45 19h512q26 0 45 -19t19 -45z"/></svg></td><td class="y l">https://blog.core-j.co.jp/competitors-keyword-research <svg class="i " style="width:12.00px;height:12px;position:relative;top:0.5px;margin-left:1px" viewBox="0 -1536 1792 1792"><path fill="#337ab7" transform="scale(1,-1)" d="M1408 608v-320q0 -119 -84.5 -203.5t-203.5 -84.5h-832q-119 0 -203.5 84.5t-84.5 203.5v832q0 119 84.5 203.5t203.5 84.5h704q14 0 23 -9t9 -23v-64q0 -14 -9 -23t-23 -9h-704q-66 0 -113 -47t-47 -113v-832q0 -66 47 -113t113 -47h832q66 0 113 47t47 113v320 q0 14 9 23t23 9h64q14 0 23 -9t9 -23zM1792 1472v-512q0 -26 -19 -45t-45 -19t-45 19l-176 176l-652 -652q-10 -10 -23 -10t-23 10l-114 114q-10 10 -10 23t10 23l652 652l-176 176q-19 19 -19 45t19 45t45 19h512q26 0 45 -19t19 -45z"/></svg></td></tr>
<tr class="o"><td>画像元検索</td><td class="b r">1位</td><td class="y r">10位</td><td class="r">90</td><td class="r">0</td><td class="r">0%</td><td class="b l">https://ferret-plus.com/6058 <svg class="i " style="width:12.00px;height:12px;position:relative;top:0.5px;margin-left:1px" viewBox="0 -1536 1792 1792"><path fill="#337ab7" transform="scale(1,-1)" d="M1408 608v-320q0 -119 -84.5 -203.5t-203.5 -84.5h-832q-119 0 -203.5 84.5t-84.5 203.5v832q0 119 84.5 203.5t203.5 84.5h704q14 0 23 -9t9 -23v-64q0 -14 -9 -23t-23 -9h-704q-66 0 -113 -47t-47 -113v-832q0 -66 47 -113t113 -47h832q66 0 113 47t47 113v320 q0 14 9 23t23 9h64q14 0 23 -9t9 -23zM1792 1472v-512q0 -26 -19 -45t-45 -19t-45 19l-176 176l-652 -652q-10 -10 -23 -10t-23 10l-114 114q-10 10 -10 23t10 23l652 652l-176 176q-19 19 -19 45t19 45t45 19h512q26 0 45 -19t19 -45z"/></svg></td><td class="y l">https://blog.core-j.co.jp/image-search <svg class="i " style="width:12.00px;height:12px;position:relative;top:0.5px;margin-left:1px" viewBox="0 -1536 1792 1792"><path fill="#337ab7" transform="scale(1,-1)" d="M1408 608v-320q0 -119 -84.5 -203.5t-203.5 -84.5h-832q-119 0 -203.5 84.5t-84.5 203.5v832q0 119 84.5 203.5t203.5 84.5h704q14 0 23 -9t9 -23v-64q0 -14 -9 -23t-23 -9h-704q-66 0 -113 -47t-47 -113v-832q0 -66 47 -113t113 -47h832q66 0 113 47t47 113v320 q0 14 9 23t23 9h64q14 0 23 -9t9 -23zM1792 1472v-512q0 -26 -19 -45t-45 -19t-45 19l-176 176l-652 -652q-10 -10 -23 -10t-23 10l-114 114q-10 10 -10 23t10 23l652 652l-176 176q-19 19 -19 45t19 45t45 19h512q26 0 45 -19t19 -45z"/></svg></td></tr>
<tr class="e"><td>コンテンツとは 例</td><td class="b r">1位</td><td class="y r">5位</td><td class="r">10</td><td class="r">0</td><td class="r">12%</td><td class="b l">https://ferret-plus.com/7184 <svg class="i " style="width:12.00px;height:12px;position:relative;top:0.5px;margin-left:1px" viewBox="0 -1536 1792 1792"><path fill="#337ab7" transform="scale(1,-1)" d="M1408 608v-320q0 -119 -84.5 -203.5t-203.5 -84.5h-832q-119 0 -203.5 84.5t-84.5 203.5v832q0 119 84.5 203.5t203.5 84.5h704q14 0 23 -9t9 -23v-64q0 -14 -9 -23t-23 -9h-704q-66 0 -113 -47t-47 -113v-832q0 -66 47 -113t113 -47h832q66 0 113 47t47 113v320 q0 14 9 23t23 9h64q14 0 23 -9t9 -23zM1792 1472v-512q0 -26 -19 -45t-45 -19t-45 19l-176 176l-652 -652q-10 -10 -23 -10t-23 10l-114 114q-10 10 -10 23t10 23l652 652l-176 176q-19 19 -19 45t19 45t45 19h512q26 0 45 -19t19 -45z"/></svg></td><td class="y l">https://blog.core-j.co.jp/high-quality-content-media <svg class="i " style="width:12.00px;height:12px;position:relative;top:0.5px;margin-left:1px" viewBox="0 -1536 1792 1792"><path fill="#337ab7" transform="scale(1,-1)" d="M1408 608v-320q0 -119 -84.5 -203.5t-203.5 -84.5h-832q-119 0 -203.5 84.5t-84.5 203.5v832q0 119 84.5 203.5t203.5 84.5h704q14 0 23 -9t9 -23v-64q0 -14 -9 -23t-23 -9h-704q-66 0 -113 -47t-47 -113v-832q0 -66 47 -113t113 -47h832q66 0 113 47t47 113v320 q0 14 9 23t23 9h64q14 0 23 -9t9 -23zM1792 1472v-512q0 -26 -19 -45t-45 -19t-45 19l-176 176l-652 -652q-10 -10 -23 -10t-23 10l-114 114q-10 10 -10 23t10 23l652 652l-176 176q-19 19 -19 45t19 45t45 19h512q26 0 45 -19t19 -45z"/></svg></td></tr>
<tr class="o"><td>youtube 動画 検索 サイト</td><td class="b r">1位</td><td class="y r">13位</td><td class="r">20</td><td class="r">9</td><td class="r">0%</td><td class="b l">https://ferret-plus.com/8441 <svg class="i " style="width:12.00px;height:12px;position:relative;top:0.5px;margin-left:1px" viewBox="0 -1536 1792 1792"><path fill="#337ab7" transform="scale(1,-1)" d="M1408 608v-320q0 -119 -84.5 -203.5t-203.5 -84.5h-832q-119 0 -203.5 84.5t-84.5 203.5v832q0 119 84.5 203.5t203.5 84.5h704q14 0 23 -9t9 -23v-64q0 -14 -9 -23t-23 -9h-704q-66 0 -113 -47t-47 -113v-832q0 -66 47 -113t113 -47h832q66 0 113 47t47 113v320 q0 14 9 23t23 9h64q14 0 23 -9t9 -23zM1792 1472v-512q0 -26 -19 -45t-45 -19t-45 19l-176 176l-652 -652q-10 -10 -23 -10t-23 10l-114 114q-10 10 -10 23t10 23l652 652l-176 176q-19 19 -19 45t19 45t45 19h512q26 0 45 -19t19 -45z"/></svg></td><td class="y l">https://blog.core-j.co.jp/youtube-seo <svg class="i " style="width:12.00px;height:12px;position:relative;top:0.5px;margin-left:1px" viewBox="0 -1536 1792 1792"><path fill="#337ab7" transform="scale(1,-1)" d="M1408 608v-320q0 -119 -84.5 -203.5t-203.5 -84.5h-832q-119 0 -203.5 84.5t-84.5 203.5v832q0 119 84.5 203.5t203.5 84.5h704q14 0 23 -9t9 -23v-64q0 -14 -9 -23t-23 -9h-704q-66 0 -113 -47t-47 -113v-832q0 -66 47 -113t113 -47h832q66 0 113 47t47 113v320 q0 14 9 23t23 9h64q14 0 23 -9t9 -23zM1792 1472v-512q0 -26 -19 -45t-45 -19t-45 19l-176 176l-652 -652q-10 -10 -23 -10t-23 10l-114 114q-10 10 -10 23t10 23l652 652l-176 176q-19 19 -19 45t19 45t45 19h512q26 0 45 -19t19 -45z"/></svg></td></tr>
<tr class="e"><td>画像 出所 検索</td><td class="b r">1位</td><td class="y r">8位</td><td class="r">10</td><td class="r">0</td><td class="r">0%</td><td class="b l">https://ferret-plus.com/6058 <svg class="i " style="width:12.00px;height:12px;position:relative;top:0.5px;margin-left:1px" viewBox="0 -1536 1792 1792"><path fill="#337ab7" transform="scale(1,-1)" d="M1408 608v-320q0 -119 -84.5 -203.5t-203.5 -84.5h-832q-119 0 -203.5 84.5t-84.5 203.5v832q0 119 84.5 203.5t203.5 84.5h704q14 0 23 -9t9 -23v-64q0 -14 -9 -23t-23 -9h-704q-66 0 -113 -47t-47 -113v-832q0 -66 47 -113t113 -47h832q66 0 113 47t47 113v320 q0 14 9 23t23 9h64q14 0 23 -9t9 -23zM1792 1472v-512q0 -26 -19 -45t-45 -19t-45 19l-176 176l-652 -652q-10 -10 -23 -10t-23 10l-114 114q-10 10 -10 23t10 23l652 652l-176 176q-19 19 -19 45t19 45t45 19h512q26 0 45 -19t19 -45z"/></svg></td><td class="y l">https://blog.core-j.co.jp/image-search <svg class="i " style="width:12.00px;height:12px;position:relative;top:0.5px;margin-left:1px" viewBox="0 -1536 1792 1792"><path fill="#337ab7" transform="scale(1,-1)" d="M1408 608v-320q0 -119 -84.5 -203.5t-203.5 -84.5h-832q-119 0 -203.5 84.5t-84.5 203.5v832q0 119 84.5 203.5t203.5 84.5h704q14 0 23 -9t9 -23v-64q0 -14 -9 -23t-23 -9h-704q-66 0 -113 -47t-47 -113v-832q0 -66 47 -113t113 -47h832q66 0 113 47t47 113v320 q0 14 9 23t23 9h64q14 0 23 -9t9 -23zM1792 1472v-512q0 -26 -19 -45t-45 -19t-45 19l-176 176l-652 -652q-10 -10 -23 -10t-23 10l-114 114q-10 10 -10 23t10 23l652 652l-176 176q-19 19 -19 45t19 45t45 19h512q26 0 45 -19t19 -45z"/></svg></td></tr>
</table>
</div>
</body></html>
